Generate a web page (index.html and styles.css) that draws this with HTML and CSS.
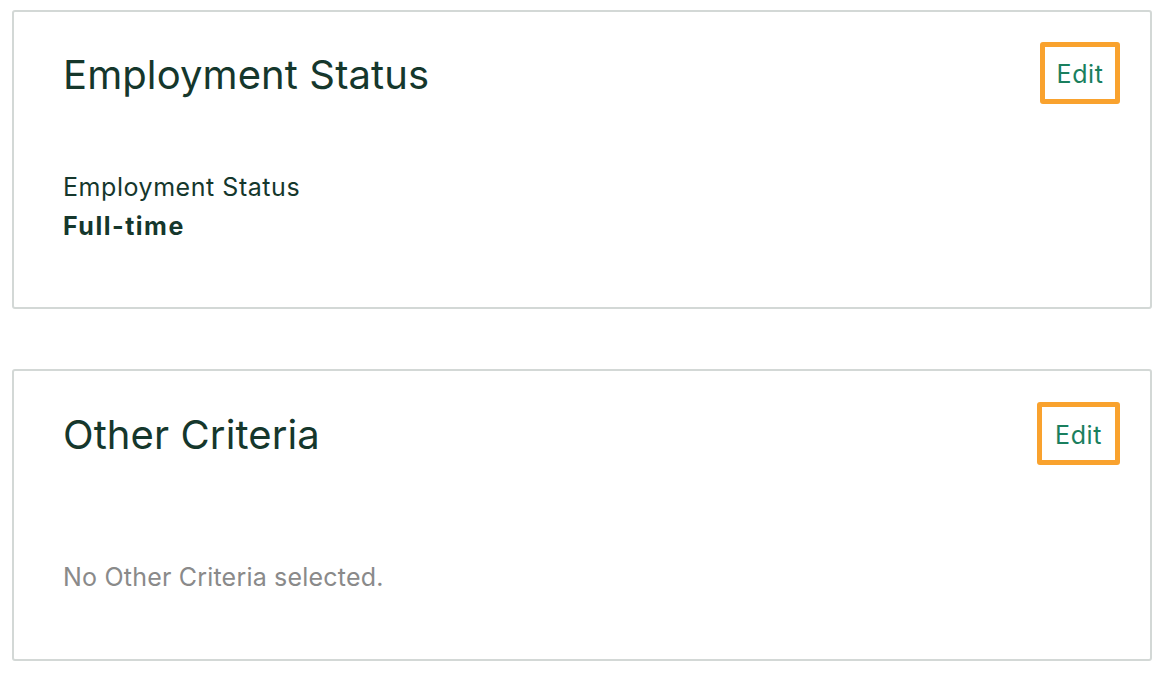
FILE: index.html
```html
<!DOCTYPE html>
<html>
<head>
<meta charset="utf-8">
<link rel="stylesheet" href="styles.css">
</head>
<body>
<main class="page">
  <section class="card card-one">
    <header class="card-head">
      <h2 class="card-title">Employment Status</h2>
      <a class="edit edit-one" href="#">Edit</a>
    </header>
    <div class="field">
      <div class="field-label">Employment Status</div>
      <div class="field-value">Full-time</div>
    </div>
  </section>
  <section class="card card-two">
    <header class="card-head head-two">
      <h2 class="card-title">Other Criteria</h2>
      <a class="edit edit-two" href="#">Edit</a>
    </header>
    <p class="empty">No Other Criteria selected.</p>
  </section>
</main>
</body>
</html>
```
FILE: styles.css
```css
html, body {
  margin: 0;
  padding: 0;
  background: #ffffff;
}
body {
  font-family: "Inter", "Noto Sans", sans-serif;
  color: #15372c;
}
.page {
  display: flex;
  flex-direction: column;
  gap: 60px;
  padding: 10px 14px 0 12px;
}
.card {
  box-sizing: border-box;
  border: 2px solid #d3d8d6;
  border-radius: 3px;
  padding: 0 30px 0 49px;
}
.card-one { height: 299px; }
.card-two { height: 292px; }
.card-head {
  display: flex;
  justify-content: space-between;
  align-items: center;
  margin-top: 30px;
  height: 62px;
}
.head-two {
  margin-top: 31px;
  height: 63px;
}
.card-title {
  margin: 0;
  padding-top: 3px;
  font-size: 40px;
  font-weight: 400;
  line-height: 1;
  letter-spacing: 0.1px;
}
.edit {
  box-sizing: border-box;
  display: flex;
  align-items: center;
  justify-content: center;
  height: 100%;
  padding-top: 2px;
  border: 5px solid #f9a22e;
  border-radius: 3px;
  color: #1a7f5e;
  text-decoration: none;
  font-size: 25px;
  letter-spacing: 0.6px;
}
.edit-one { width: 80px; }
.edit-two { width: 83px; }
.field { margin-top: 64px; }
.field-label {
  font-size: 25px;
  line-height: 38px;
  letter-spacing: 0.55px;
}
.field-value {
  font-size: 25px;
  font-weight: 700;
  line-height: 40px;
  letter-spacing: 1.5px;
}
.empty {
  margin: 97px 0 0;
  font-size: 25px;
  line-height: 1.21;
  letter-spacing: 0.2px;
  color: #8a8a8a;
}
```
